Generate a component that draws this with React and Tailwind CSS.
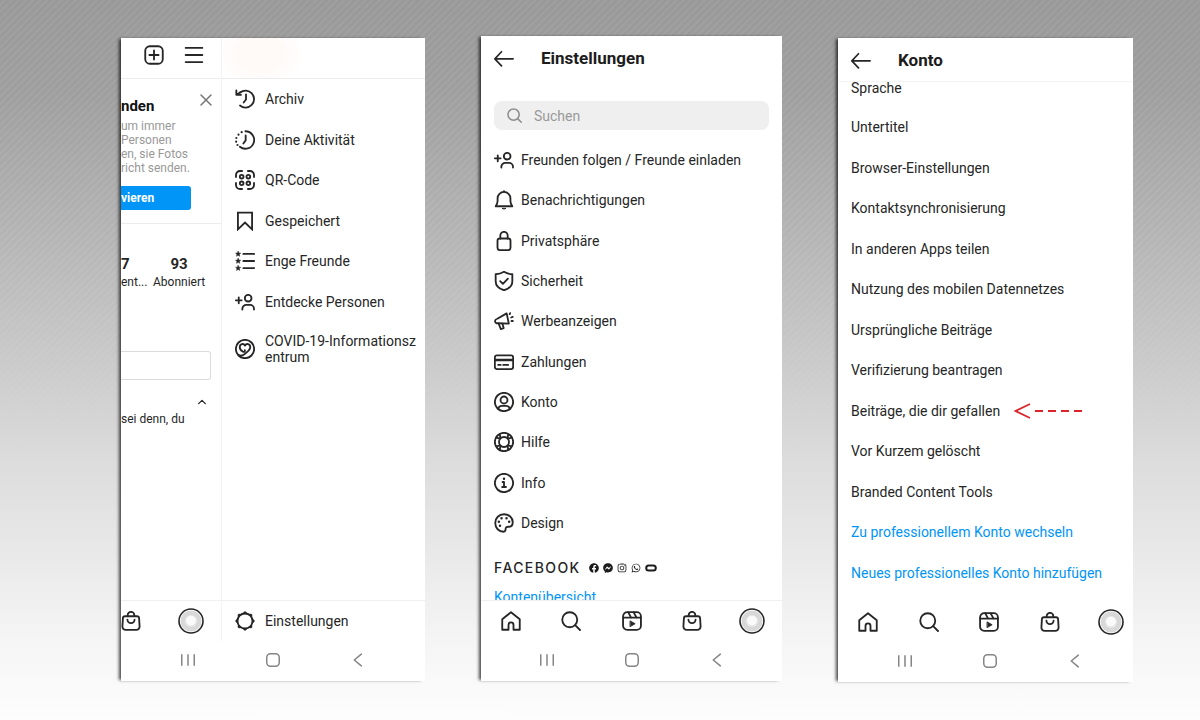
import React from "react";
import { FaFacebook, FaFacebookMessenger, FaInstagram, FaWhatsapp } from "react-icons/fa";

function Icon({ children, className = "size-5", width = 2.2 }) {
  return (
    <svg
      viewBox="0 0 24 24"
      className={`${className} shrink-0`}
      fill="none"
      stroke="currentColor"
      strokeWidth={width}
      strokeLinecap="round"
      strokeLinejoin="round"
      aria-hidden="true"
    >
      {children}
    </svg>
  );
}

const star = "M0-3.2.9-1.1 3.1-.9 1.4.6 2 2.8 0 1.6-2 2.8-1.4.6-3.1-.9-.9-1.1z";
const gearPoints = [0, 45, 90, 135, 180, 225, 270, 315];

const icons = {
  archive: (
    <>
      <path d="M4.2 7.400 1.800 2.600M3 7.600A10.400 10.400 0 1 1 5.600 20" stroke="none" />
      <path d="M6.200 4.200A10.200 10.200 0 1 1 6 19.800" />
      <path d="M1.600 1.800v5.200h5.600M2 7 6.400 4" />
      <path d="M13.200 6.600v6l-2.800 3.600" />
    </>
  ),
  activity: (
    <>
      <path d="M12.500 1.500a10.500 10.500 0 1 1-6.700 18.600" />
      <path d="M12.800 6.600v5.800L10 16.200" />
      <path
        d="M8 2.600h.01M4.200 5.600h.01M1.600 9.600h.01M1.400 14h.01M3 18h.01"
        strokeWidth="2.600"
      />
    </>
  ),
  qr: (
    <>
      <path d="M8.500 1.200H6A4.800 4.800 0 0 0 1.200 6v2.500M15.500 1.200H18A4.800 4.800 0 0 1 22.800 6v2.500M8.500 22.800H6A4.800 4.800 0 0 1 1.200 18v-2.500M15.500 22.800H18a4.800 4.800 0 0 0 4.800-4.800v-2.500" />
      <circle cx="8" cy="8" r="2.200" />
      <circle cx="16" cy="8" r="2.200" />
      <circle cx="8" cy="16" r="2.200" />
      <circle cx="16" cy="16" r="2.200" />
    </>
  ),
  bookmark: <path d="M20.500 22 12 13.800 3.500 22V2h17z" strokeLinejoin="miter" />,
  closeFriends: (
    <>
      <path d="M10 3.500h13M10 12h13M10 20.500h13" />
      <g fill="currentColor" strokeWidth=".6">
        <path d={star} transform="translate(3.800 3.500)" />
        <path d={star} transform="translate(3.800 12)" />
        <path d={star} transform="translate(3.800 20.500)" />
      </g>
    </>
  ),
  addPerson: (
    <>
      <path d="M1 10h7M4.500 6.500v7" />
      <circle cx="15.800" cy="7.400" r="4" />
      <path d="M8.800 21v-.8a4.700 4.700 0 0 1 4.700-4.700h4.600a4.700 4.700 0 0 1 4.700 4.700v.8" />
    </>
  ),
  heart: (
    <>
      <circle cx="12" cy="12" r="11" />
      <path d="M4.500 19.200c2.800 1.400 5.300.5 7.500-1.400 3.400-2.900 6.300-4.800 6.300-7.900 0-4.300-4.700-5-6.300-1.900-1.600-3.100-6.300-2.400-6.300 1.900 0 2.300 1.600 4.200 3.900 5.400 1.600.6 2.800-.6 2.200-2" />
    </>
  ),
  gear: (
    <>
      <circle cx="12" cy="12" r="9" />
      <g fill="currentColor" stroke="none">
        {gearPoints.map((angle) => (
          <path key={angle} d="M8.800 3.200 11 .6h2l2.200 2.600z" transform={`rotate(${angle} 12 12)`} />
        ))}
      </g>
    </>
  ),
  bell: (
    <>
      <path d="M2 19.500h20c-1.600-1.800-2.300-3.600-2.300-6.200V10a7.700 7.700 0 0 0-15.400 0v3.300c0 2.600-.7 4.400-2.300 6.200z" />
      <path d="M10 22.300q2 1.400 4 0z" fill="currentColor" strokeWidth="1" />
      <path d="M12 2V1.400" />
    </>
  ),
  lock: (
    <>
      <rect x="4.200" y="9" width="15.600" height="14" rx="2.800" />
      <path d="M7.600 9V5.400a4.400 4.400 0 0 1 8.800 0V9" />
    </>
  ),
  shield: (
    <>
      <path d="M12 1c3 1.900 6.300 2.800 10 2.900v8.300c0 5.500-3.700 9-10 10.900C5.700 21.200 2 17.700 2 12.200V3.900C5.700 3.800 9 2.900 12 1z" />
      <path d="m7.400 12.200 3.300 3.200 6-6.200" />
    </>
  ),
  megaphone: (
    <>
      <path d="M15.200 2.800 4 9.300c-1.600.5-3 1.300-2.700 3.100.2 1.800 1.600 2.500 3.300 2.300l13.200.4z" />
      <path d="m5.500 15 2.700 6.700 3.400-1.200-1.500-5.200" />
      <path d="m18.800 3.800.6-1.200M20.600 7.800l1.900-.7M21 12h1.600" />
    </>
  ),
  card: (
    <>
      <rect x="1" y="4" width="22" height="16.500" rx="2.500" />
      <path d="M1 9.500h22" strokeWidth="3" />
      <path d="M5 15.500h3M11 15.500h6" />
    </>
  ),
  account: (
    <>
      <circle cx="12" cy="12" r="11" />
      <circle cx="12" cy="9.600" r="4.200" />
      <path d="M5 20.300c.6-2.600 2.300-3.600 4.500-3.600h5c2.200 0 3.900 1 4.500 3.600" />
    </>
  ),
  help: (
    <>
      <circle cx="12" cy="12" r="11" />
      <circle cx="12" cy="12" r="6" />
      <path d="M6.800 2.800 8 7.500M17.200 2.800 16 7.500M6.800 21.200 8 16.500M17.200 21.200 16 16.500M2.800 6.800 7.500 8M2.800 17.200 7.500 16M21.200 6.800 16.500 8M21.200 17.200 16.500 16" />
    </>
  ),
  info: (
    <>
      <circle cx="12" cy="12" r="11" />
      <path d="M10.300 10.800H12v5.800M9.800 16.800h4.600" />
      <path d="M12 7h.01" strokeWidth="3" />
    </>
  ),
  palette: (
    <>
      <path d="M12 1.500c6 0 10.500 4 10.500 9.500 0 3.800-2.400 5.500-5.200 5.500-2.300 0-3.300.6-3.300 2.200 0 2.300-.4 3.800-2.400 3.800C5.800 22.500 1.500 18 1.500 12S6 1.500 12 1.500z" />
      <path d="M9 6.200h.01M15 6.200h.01M18.200 10.600h.01M5.800 10.600h.01M7.200 15.400h.01" strokeWidth="3" />
    </>
  ),
  search: (
    <>
      <circle cx="10.500" cy="10.500" r="9" />
      <path d="m17 17 5.800 5.800" />
    </>
  ),
  home: (
    <path
      d="M9 22.500v-5.800a3 3 0 0 1 6 0v5.800h7.500V9.800L12 1.500 1.500 9.800v12.700z"
    />
  ),
  reels: (
    <>
      <rect x="1.300" y="1.300" width="21.400" height="21.400" rx="5" />
      <path d="M1.500 8h21M7.500 1.600 11 8M14 1.600 17.500 8" />
      <path d="m10 12 5.800 3.300L10 18.600z" fill="currentColor" strokeWidth="1" />
    </>
  ),
  bag: (
    <>
      <path d="M4.800 6.300h14.400a2.500 2.500 0 0 1 2.500 2.300l.6 9.700a4 4 0 0 1-4 4.400H5.700a4 4 0 0 1-4-4.400l.6-9.700a2.500 2.500 0 0 1 2.500-2.300z" />
      <path d="M8 6V5a4 4 0 0 1 8 0v1M7.700 10.300a4.300 4.300 0 0 0 8.600 0" />
    </>
  ),
};

function Profile() {
  return (
    <svg viewBox="0 0 26 26" className="size-[26px] shrink-0" aria-hidden="true">
      <circle cx="13" cy="13" r="12" fill="#fff" stroke="#262626" strokeWidth="1.600" />
      <circle cx="13" cy="13" r="10.500" fill="#d8d8d8" />
      <circle cx="13" cy="13" r="6" fill="#e8e8e8" />
      <circle cx="13" cy="12.500" r="4.800" fill="#fafafa" />
    </svg>
  );
}

const tabs = [
  ["Startseite", "home"],
  ["Suche", "search"],
  ["Reels", "reels"],
  ["Shop", "bag"],
  ["Profil", null],
];

function TabBar({ items = tabs, line = "border-[#efefef]" }) {
  return (
    <nav className={`flex h-[41px] shrink-0 border-t ${line}`}>
      {items.map(([label, icon]) => (
        <button key={label} aria-label={label} className="flex w-[60px] shrink-0 grow items-center justify-center">
          {icon ? <Icon>{icons[icon]}</Icon> : <Profile />}
        </button>
      ))}
    </nav>
  );
}

function SystemBar() {
  return (
    <div className="flex h-10 shrink-0 items-center justify-center gap-[65px] pb-0.5 text-[#858585]">
      <button aria-label="Letzte Apps">
        <Icon width={1.8}>
          <path d="M4.500 5v14M12 5v14M19.500 5v14" strokeLinecap="butt" />
        </Icon>
      </button>
      <button aria-label="Startbildschirm">
        <Icon width={1.8}>
          <rect x="4.500" y="4.500" width="15" height="15" rx="4.500" />
        </Icon>
      </button>
      <button aria-label="Zurück">
        <Icon width={1.8}>
          <path d="m16 5-8.500 7 8.500 7" />
        </Icon>
      </button>
    </div>
  );
}

function Screen({ className = "", children }) {
  return (
    <section
      className={`flex min-w-0 flex-col overflow-hidden bg-white shadow-[-3px_0px_3px_-1px_rgba(0,0,0,0.7)] ${className}`}
    >
      {children}
    </section>
  );
}

function Header({ title, line = "border-transparent" }) {
  return (
    <header className={`flex h-11 shrink-0 items-center gap-[27px] border-b px-[13px] ${line}`}>
      <button aria-label="Zurück">
        <Icon width={2}>
          <path d="M1 13h22M9 4.500 1 13l8 8.500" />
        </Icon>
      </button>
      <h2 className="text-[17px] leading-6 font-bold text-[#1c1c1c]">{title}</h2>
    </header>
  );
}

const drawerItems = [
  ["Archiv", "archive"],
  ["Deine Aktivität", "activity"],
  ["QR-Code", "qr"],
  ["Gespeichert", "bookmark"],
  ["Enge Freunde", "closeFriends"],
  ["Entdecke Personen", "addPerson"],
  ["COVID-19-Informationszentrum", "heart"],
];

function ProfileEdge() {
  return (
    <div className="flex w-[100px] shrink-0 flex-col overflow-hidden">
      <div className="flex h-10 items-center justify-end gap-5 pt-px pr-[17px] pb-2">
        <button aria-label="Neuer Beitrag">
          <Icon>
            <rect x="1.500" y="1.500" width="21" height="21" rx="5.500" />
            <path d="M12 6.500v11M6.500 12h11" />
          </Icon>
        </button>
        <button aria-label="Menü">
          <Icon>
            <path d="M2 3.500h20M2 12h20M2 20.500h20" />
          </Icon>
        </button>
      </div>
      <div className="flex flex-col border-y border-[#ececec] pt-[14px] pb-[13px] text-xs leading-[14px] text-[#999]">
        <div className="flex h-[26px] items-center justify-between pr-[9px]">
          <h3 className="text-[15px] font-bold text-[#111]">nden</h3>
          <button aria-label="Schließen" className="pb-3 text-[#777]">
            <Icon className="size-3" width={3}>
              <path d="m2 2 20 20M22 2 2 22" />
            </Icon>
          </button>
        </div>
        <p className="whitespace-nowrap">
          um immer
          <br />
          Personen
          <br />
          en, sie Fotos
          <br />
          richt senden.
        </p>
        <button className="mt-[11px] mr-[30px] h-6 rounded-r-[3px] bg-[#0095f6] text-left text-xs font-bold text-white">
          vieren
        </button>
      </div>
      <dl className="mt-[31px] flex gap-2 whitespace-nowrap text-[#262626]">
        <div className="flex w-6 flex-col-reverse">
          <dt className="text-xs leading-[18px]">ent...</dt>
          <dd className="text-[15px] leading-[18px] font-bold">7</dd>
        </div>
        <div className="flex flex-col-reverse text-center">
          <dt className="text-xs leading-[18px]">Abonniert</dt>
          <dd className="text-[15px] leading-[18px] font-bold">93</dd>
        </div>
      </dl>
      <button
        aria-label="Profil bearbeiten"
        className="mt-[60px] mr-[10px] h-[29px] rounded-r-[3px] border border-l-0 border-[#dbdbdb]"
      />
      <button aria-label="Einklappen" className="mt-[17px] mr-[14px] self-end">
        <Icon className="size-[10px]" width={3}>
          <path d="m4 16 8-8 8 8" />
        </Icon>
      </button>
      <p className="mt-1 text-xs whitespace-nowrap text-[#262626]">sei denn, du</p>
      <div className="mt-auto flex justify-end">
        <TabBar items={tabs.slice(3)} />
      </div>
    </div>
  );
}

function DrawerScreen() {
  return (
    <Screen className="mt-0.5 mb-px">
      <div className="flex grow">
        <ProfileEdge />
        <div className="flex min-w-0 grow flex-col border-l border-[#f3f3f3]">
          <div className="h-10 bg-[radial-gradient(ellipse_46px_34px_at_38px_16px,#fffaf8_50%,#ffffff)]" />
          <div className="grow border-t border-[#ececec]">
            <ul className="grid h-[297px] grid-rows-[repeat(6,1fr)_54px]">
              {drawerItems.map(([label, icon]) => (
                <li key={label} className="flex">
                  <a href="#menu" className="flex grow items-center gap-2.5 pr-2 pl-[13px] leading-4">
                    <Icon>{icons[icon]}</Icon>
                    <span className="min-w-0 break-all">{label}</span>
                  </a>
                </li>
              ))}
            </ul>
          </div>
          <a href="#einstellungen" className="flex h-[41px] items-center gap-2.5 border-t border-[#efefef] px-[13px]">
            <Icon>{icons.gear}</Icon>
            Einstellungen
          </a>
        </div>
      </div>
      <SystemBar />
    </Screen>
  );
}

const settings = [
  ["Freunden folgen / Freunde einladen", "addPerson"],
  ["Benachrichtigungen", "bell"],
  ["Privatsphäre", "lock"],
  ["Sicherheit", "shield"],
  ["Werbeanzeigen", "megaphone"],
  ["Zahlungen", "card"],
  ["Konto", "account"],
  ["Hilfe", "help"],
  ["Info", "info"],
  ["Design", "palette"],
];

function SettingsScreen() {
  return (
    <Screen className="mb-px">
      <Header title="Einstellungen" />
      <label className="mx-[13px] mt-[21px] mb-2.5 flex h-[29px] shrink-0 items-center gap-3 rounded-lg bg-[#efefef] px-[13px] text-[#8e8e8e]">
        <Icon className="size-[15px]" width={2.5}>
          {icons.search}
        </Icon>
        <input
          type="search"
          aria-label="Suchen"
          placeholder="Suchen"
          className="w-full min-w-0 bg-transparent outline-none placeholder:text-[#999]"
        />
      </label>
      <ul className="flex grow flex-col">
        {settings.map(([label, icon]) => (
          <li key={label} className="flex grow">
            <a href="#eintrag" className="flex grow items-center gap-[7px] px-[13px]">
              <Icon>{icons[icon]}</Icon>
              {label}
            </a>
          </li>
        ))}
      </ul>
      <div className="h-[57px] shrink-0 overflow-hidden px-[13px] pt-4">
        <div className="flex items-center gap-2">
          <span className="font-[Inter,sans-serif] leading-[18px] font-medium tracking-widest">FACEBOOK</span>
          <span className="flex items-center gap-1 text-[#1c1c1c]">
            <FaFacebook className="size-[10px]" />
            <FaFacebookMessenger className="size-[10px]" />
            <FaInstagram className="size-[10px]" />
            <FaWhatsapp className="size-[10px]" />
            <svg viewBox="0 0 12 8" className="h-2 w-3" aria-hidden="true">
              <rect x="1.200" y="1.500" width="9.600" height="5" rx="2.500" fill="none" stroke="currentColor" strokeWidth="2" />
            </svg>
          </span>
        </div>
        <a href="#konten" className="mt-[10px] block leading-5 text-[#0095f6]">
          Kontenübersicht
        </a>
      </div>
      <TabBar />
      <SystemBar />
    </Screen>
  );
}

const accountItems = [
  "Untertitel",
  "Browser-Einstellungen",
  "Kontaktsynchronisierung",
  "In anderen Apps teilen",
  "Nutzung des mobilen Datennetzes",
  "Ursprüngliche Beiträge",
  "Verifizierung beantragen",
  "Beiträge, die dir gefallen",
  "Vor Kurzem gelöscht",
  "Branded Content Tools",
];

const accountLinks = ["Zu professionellem Konto wechseln", "Neues professionelles Konto hinzufügen"];

function Pointer() {
  return (
    <svg viewBox="0 0 70 16" className="h-4 w-[70px] shrink-0" fill="none" stroke="#dc2329" strokeWidth="2" aria-hidden="true">
      <path d="M16 1 1.500 8 16 15" strokeWidth="1.700" />
      <path d="M21 8h48" strokeDasharray="8 5" />
    </svg>
  );
}

function AccountScreen() {
  return (
    <Screen className="mt-0.5">
      <Header title="Konto" line="border-[#f3f3f3]" />
      <ul className="flex grow flex-col pb-2">
        <li className="h-[25px] px-[13px]">
          <a href="#eintrag" className="block leading-3">
            Sprache
          </a>
        </li>
        {accountItems.map((label) => (
          <li key={label} className="flex grow">
            <a href="#eintrag" className="flex grow items-center gap-[14px] px-[13px]">
              {label}
              {label === "Beiträge, die dir gefallen" && <Pointer />}
            </a>
          </li>
        ))}
        {accountLinks.map((label) => (
          <li key={label} className="flex grow text-[#0095f6]">
            <a href="#professionell" className="flex grow items-center px-[13px]">
              {label}
            </a>
          </li>
        ))}
      </ul>
      <div className="-mr-2">
        <TabBar line="border-transparent" />
        <SystemBar />
      </div>
    </Screen>
  );
}

export default function App() {
  return (
    <main className="grid min-h-screen grid-cols-[304fr_301fr_295fr] gap-x-14 bg-[linear-gradient(180deg,#9b9b9bd9_0%,#a2a2a2d9_13%,#b9b9b9e0_32%,#cdcdcdf2_50%,#dcdcdc_64%,#e9e9e9_77%,#f5f5f5_89%,#fdfdfd_100%),repeating-linear-gradient(135deg,#8c8c8c_0px,#8c8c8c_2px,#b4b4b4_3px,#b4b4b4_4px,#8c8c8c_5px)] pt-9 pr-[67px] pb-[38px] pl-[121px] font-[Roboto,sans-serif] text-sm text-[#262626]">
      <DrawerScreen />
      <SettingsScreen />
      <AccountScreen />
    </main>
  );
}
